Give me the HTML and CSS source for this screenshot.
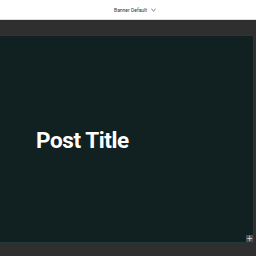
FILE: index.html
```html
<!DOCTYPE html>
<html lang="en">
<head>
<meta charset="UTF-8">
<title>Editor</title>
<link rel="stylesheet" href="styles.css">
</head>
<body>
  <div class="topbar">
    <span class="template-name">Banner Default</span>
    <svg class="chevron" width="5" height="4" viewBox="0 0 6 4"><path d="M0.5 0.8 L3 3.2 L5.5 0.8" fill="none" stroke="#333" stroke-width="0.9"/></svg>
  </div>
  <div class="workspace">
    <div class="canvas">
      <h1 class="post-title">Post Title</h1>
      <button class="add-btn">+</button>
    </div>
  </div>
</body>
</html>
```

FILE: styles.css
```css
html, body {
  margin: 0;
  height: 100%;
}
body {
  background: #2f2f2f;
  font-family: Roboto, "Liberation Sans", sans-serif;
  display: flex;
  flex-direction: column;
}
.topbar {
  height: 19px;
  background: #fff;
  border-bottom: 1px solid #dcdcdc;
  display: flex;
  align-items: center;
  justify-content: center;
  gap: 4px;
  padding-left: 14px;
}
.template-name {
  font-size: 5px;
  color: #333;
}
.workspace {
  flex: 1;
  padding: 15px 2px 13px 0;
  display: flex;
}
.canvas {
  flex: 1;
  background: #112020;
  border: 1px solid #20393d;
  border-left: none;
  position: relative;
  display: flex;
  align-items: center;
}
.post-title {
  margin: 0 0 0 36px;
  color: #fff;
  font-size: 22.5px;
  font-weight: 700;
  letter-spacing: -0.4px;
  position: relative;
  top: 1px;
}
.add-btn {
  position: absolute;
  right: 0;
  bottom: 0;
  width: 7px;
  height: 7px;
  padding: 0;
  border: none;
  background: #48504f;
  color: #d8dede;
  font-size: 8px;
  line-height: 7px;
  font-family: "DejaVu Sans", sans-serif;
}
```
